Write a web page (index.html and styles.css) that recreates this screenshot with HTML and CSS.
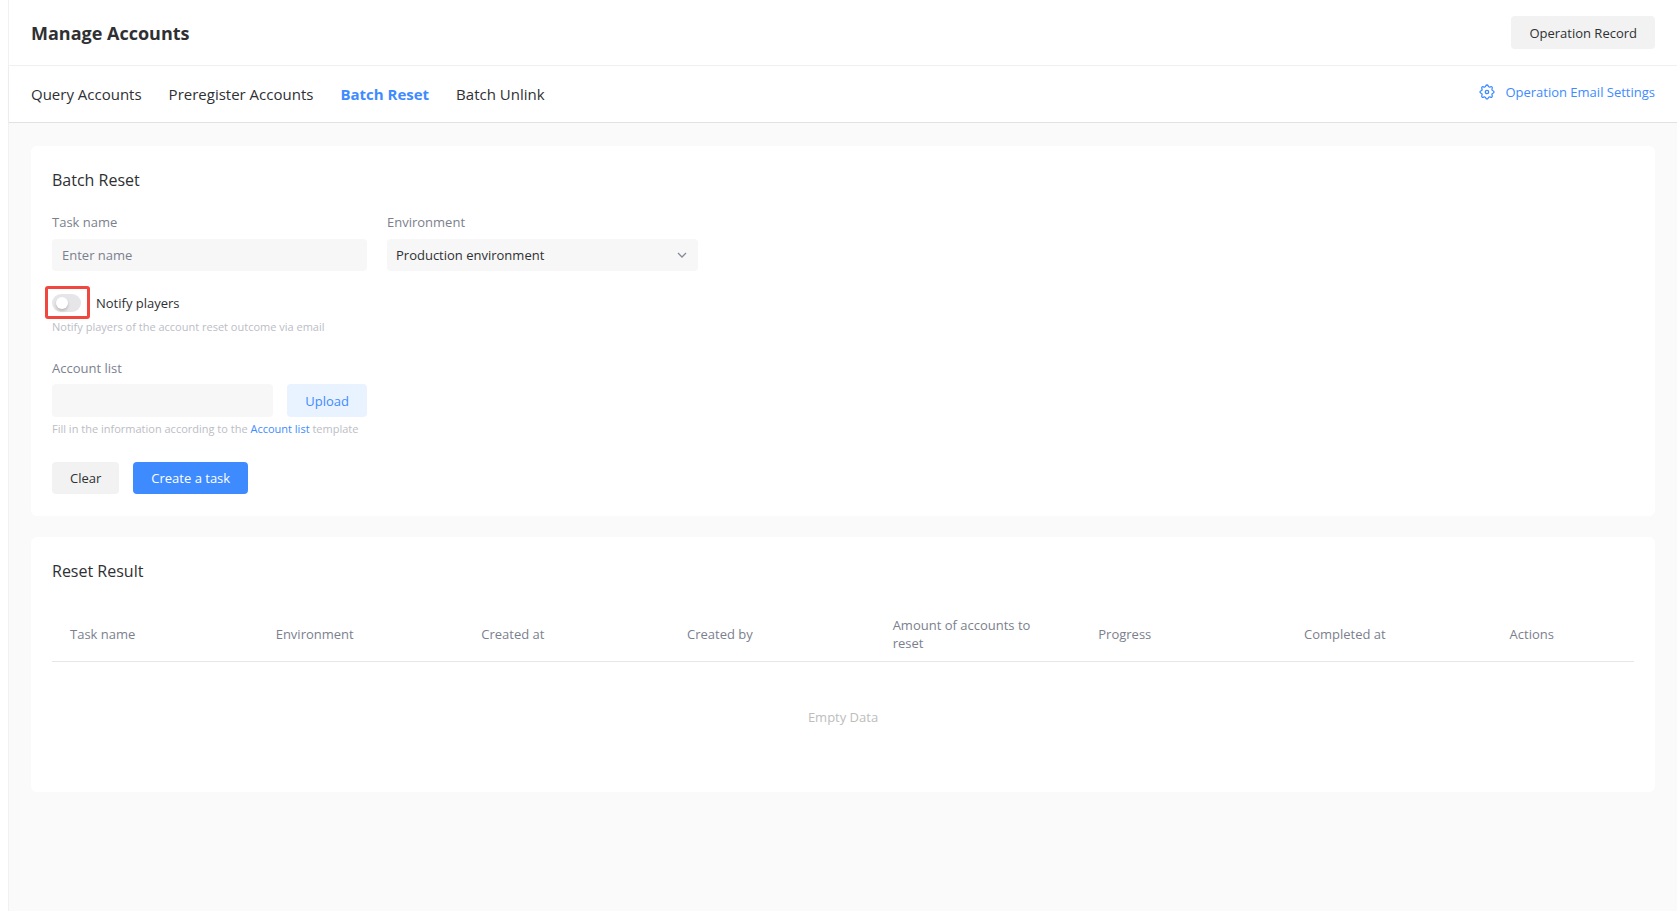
FILE: index.html
```html
<!DOCTYPE html>
<html lang="en">
<head>
<meta charset="utf-8">
<title>Manage Accounts</title>
<link rel="stylesheet" href="styles.css">
</head>
<body>
<div class="page">
  <header class="page-header">
    <h1 class="page-title">Manage Accounts</h1>
    <button type="button" class="button button-tall">Operation Record</button>
  </header>
  <div class="tab-bar">
    <nav class="tabs">
      <a class="tab" href="#">Query Accounts</a>
      <a class="tab" href="#">Preregister Accounts</a>
      <a class="tab tab-active" href="#" aria-current="page">Batch Reset</a>
      <a class="tab" href="#">Batch Unlink</a>
    </nav>
    <a class="settings-link" href="#">
      <svg class="gear" viewBox="0 0 16 16" aria-hidden="true">
        <defs><path id="tooth" d="M8 1C9.4 1 9 2.6 10.07 3.01C11.1 3.4 11.96 2.06 12.95 3.05"/></defs>
        <use href="#tooth"/>
        <use href="#tooth" transform="rotate(45 8 8)"/>
        <use href="#tooth" transform="rotate(90 8 8)"/>
        <use href="#tooth" transform="rotate(135 8 8)"/>
        <use href="#tooth" transform="rotate(180 8 8)"/>
        <use href="#tooth" transform="rotate(225 8 8)"/>
        <use href="#tooth" transform="rotate(270 8 8)"/>
        <use href="#tooth" transform="rotate(315 8 8)"/>
        <circle cx="8" cy="8" r="1.7"/>
      </svg>
      Operation Email Settings
    </a>
  </div>
  <main class="content">
    <section class="card">
      <h2 class="card-title">Batch Reset</h2>
      <form class="reset-form">
        <div class="field-row">
          <div class="field">
            <label class="label" for="task-name">Task name</label>
            <input class="input" id="task-name" type="text" placeholder="Enter name">
          </div>
          <div class="field">
            <label class="label" for="environment">Environment</label>
            <div class="select-wrap">
              <select class="input select" id="environment"><option>Production environment</option></select>
              <svg class="chevron" viewBox="0 0 10 10" aria-hidden="true"><path d="M1 3l4 4 4-4"/></svg>
            </div>
          </div>
        </div>
        <div class="notify">
          <span class="highlight"><input class="switch" id="notify" type="checkbox" role="switch"></span>
          <label class="notify-label" for="notify">Notify players</label>
        </div>
        <p class="hint">Notify players of the account reset outcome via email</p>
        <div class="field account-field">
          <label class="label" for="account-list">Account list</label>
          <div class="upload-row">
            <input class="input file-name" id="account-list" type="text" readonly>
            <button type="button" class="button button-tall button-soft">Upload</button>
          </div>
        </div>
        <p class="hint">Fill in the information according to the <a class="hint-link" href="#">Account list</a> template</p>
        <div class="actions">
          <button type="reset" class="button">Clear</button>
          <button type="button" class="button button-primary">Create a task</button>
        </div>
      </form>
    </section>
    <section class="card">
      <h2 class="card-title">Reset Result</h2>
      <table class="results">
        <thead>
          <tr>
            <th>Task name</th>
            <th>Environment</th>
            <th>Created at</th>
            <th>Created by</th>
            <th>Amount of accounts to reset</th>
            <th>Progress</th>
            <th>Completed at</th>
            <th class="col-actions">Actions</th>
          </tr>
        </thead>
        <tbody>
          <tr><td class="empty" colspan="8">Empty Data</td></tr>
        </tbody>
      </table>
    </section>
  </main>
</div>
</body>
</html>
```
FILE: styles.css
```css
* { box-sizing: border-box; }

body {
  margin: 0;
  padding-left: 8px;
  background: #fff;
  color: #2f3033;
  font-family: "Segoe UI", "Open Sans", "Noto Sans", sans-serif;
  font-size: 13px;
  line-height: 18px;
}

a { text-decoration: none; }

.page {
  display: flex;
  flex-direction: column;
  min-height: 100vh;
  border-left: 1px solid #f0f1f5;
}

.page-header {
  display: flex;
  align-items: center;
  justify-content: space-between;
  padding: 16px 22px;
  border-bottom: 1px solid #f0f1f3;
}

.page-title {
  margin: 0;
  font-size: 18px;
  line-height: 32px;
  font-weight: 700;
}

.tab-bar {
  display: flex;
  align-items: center;
  justify-content: space-between;
  padding: 16px 22px;
  border-bottom: 1px solid #e2e2e2;
  box-shadow: 0 1px 2px rgba(0, 0, 0, 0.06);
}

.tabs { display: flex; gap: 27px; }

.tab {
  color: #2f3033;
  font-size: 15px;
  line-height: 24px;
}

.tab-active { color: #3d8bff; font-weight: 700; }

.settings-link {
  display: flex;
  align-items: center;
  gap: 10px;
  padding-bottom: 4px;
  color: #3d8bff;
}

.gear {
  width: 16px;
  height: 16px;
  fill: none;
  stroke: currentColor;
  stroke-width: 1.3;
}

.content {
  display: flex;
  flex: 1;
  flex-direction: column;
  gap: 21px;
  padding: 23px 22px;
  background: #fafafa;
}

.card {
  padding: 22px 21px;
  border-radius: 6px;
  background: #fff;
}

.card-title {
  margin: 0;
  font-size: 16px;
  line-height: 24px;
  font-weight: 400;
}

.field-row {
  display: flex;
  gap: 20px;
  margin-top: 21px;
}

.field {
  display: flex;
  flex-direction: column;
  gap: 8px;
  width: 315px;
}

.label { color: #7b7f8e; }

.input {
  width: 100%;
  height: 32px;
  padding: 0 10px;
  border: 0;
  border-radius: 4px;
  background: #f7f7f7;
  color: #2f3033;
  font: inherit;
}

.input::placeholder { color: #7b7f8e; opacity: 1; }

.select-wrap { position: relative; width: 311px; }

.select { padding: 0 9px; appearance: none; }

.chevron {
  position: absolute;
  top: 11px;
  right: 11px;
  width: 10px;
  height: 10px;
  fill: none;
  stroke: #858999;
  stroke-width: 1.3;
  pointer-events: none;
}

.notify {
  display: flex;
  align-items: center;
  gap: 6px;
  margin-top: 15px;
  margin-left: -7px;
}

.highlight {
  display: flex;
  padding: 5px 6px 4px 4px;
  border: 3px solid #f0483e;
  border-radius: 3px;
}

.switch {
  display: flex;
  align-items: center;
  appearance: none;
  width: 29px;
  height: 18px;
  margin: 0;
  padding: 0 4px;
  border-radius: 9px;
  background: #e6e6e8;
}

.switch::before {
  content: "";
  width: 12px;
  height: 12px;
  border-radius: 50%;
  background: #fff;
  box-shadow: 0 2px 3px rgba(0, 0, 0, 0.2);
}

.hint {
  margin: 0;
  color: #bcbdc6;
  font-size: 11px;
  line-height: 16px;
}

.hint-link { color: #3d8bff; }

.account-field { gap: 7px; margin-top: 24px; margin-bottom: 4px; }

.upload-row { display: flex; gap: 14px; }

.file-name { flex: 1; height: 33px; }

.actions { display: flex; gap: 14px; margin-top: 25px; }

.button {
  height: 32px;
  padding: 0 18px;
  border: 0;
  border-radius: 4px;
  background: #f2f2f2;
  color: #2f3033;
  font: inherit;
}

.button-tall { height: 33px; }

.button-soft { background: #e9f2ff; color: #3d8bff; }

.button-primary { background: #3d8bff; color: #fff; }

.results {
  width: 100%;
  margin-top: 24px;
  border-spacing: 0;
  table-layout: fixed;
}

.results th {
  width: 13%;
  padding: 9px 18px;
  border-bottom: 1px solid #e6e6e6;
  color: #7b7f8e;
  font-weight: 400;
  text-align: left;
}

.results .col-actions { width: 9%; }

.empty {
  padding: 46px 0 44px;
  color: #bdbdbd;
  text-align: center;
}
```
